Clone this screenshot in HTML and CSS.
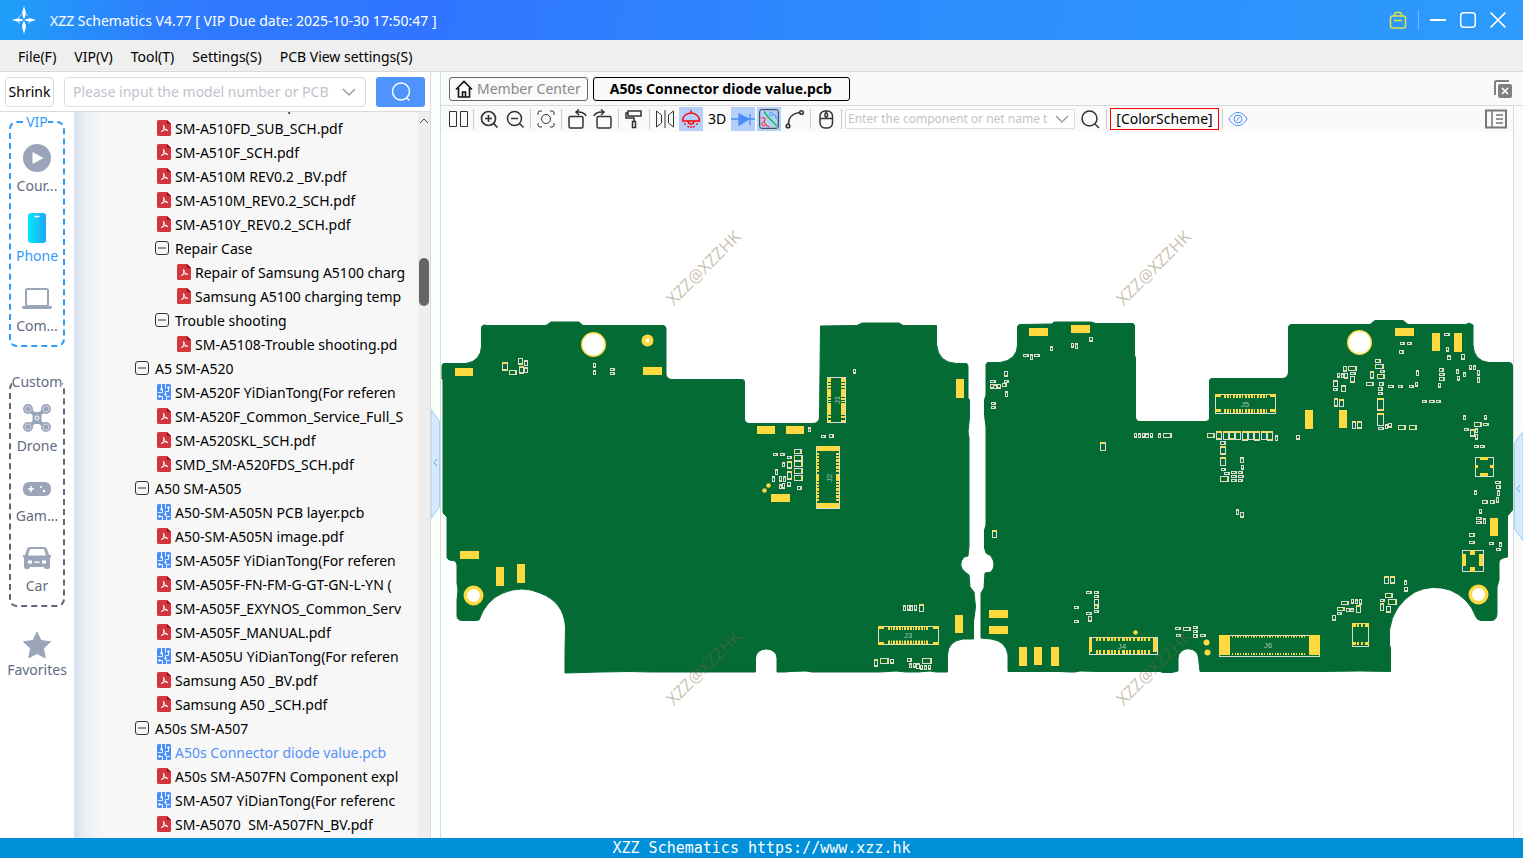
FILE: index.html
```html
<!DOCTYPE html>
<html lang="en">
<head>
  <meta charset="UTF-8">
  <title>XZZ Schematics V4.77</title>
  <link rel="stylesheet" href="styles.css">
</head>
<body>

<!-- shared symbols -->
<svg class="symbols" aria-hidden="true">
  <symbol id="i-pdf" viewBox="0 0 14 16">
    <path d="M1.500 0H10l4 4v10.500a1.500 1.500 0 0 1-1.500 1.500h-11A1.500 1.500 0 0 1 0 14.500v-13A1.500 1.500 0 0 1 1.500 0z" fill="#d3373d"/>
    <path d="M10 0l4 4h-4z" fill="#8f1218"/>
    <path d="M6.600 5.200c0 2.600 1.500 4.300 4.300 5.500M7 6c.2 2.600-1 4.600-3 6M4.400 11.500c1.800-1.500 3.800-2 6-1.500" fill="none" stroke="#fff"/>
  </symbol>
  <symbol id="i-pcb" viewBox="0 0 14 16">
    <rect width="14" height="16" rx="1.500" fill="#4a8ff7"/>
    <path d="M4.500 0v4.500M1 8.500h4.500v-3M8.500 0v4.500M11.500 3v4.500h-3v3M5.500 16v-3.500H2M9.500 16v-3.500H13" fill="none" stroke="#fff" stroke-width=".9"/>
    <g fill="#fff"><circle cx="4.500" cy="5" r="1.200"/><circle cx="11.500" cy="3.500" r="1.200"/><circle cx="8.500" cy="10.500" r="1.200"/><circle cx="2.500" cy="12.500" r="1.200"/></g>
  </symbol>
  <symbol id="i-minus" viewBox="0 0 14 14">
    <rect x=".5" y=".5" width="13" height="13" rx="2.500" fill="none" stroke="#333"/>
    <path d="M3 7h8" stroke="#333"/>
  </symbol>
  <symbol id="i-down" viewBox="0 0 14 14">
    <path d="M1 4l6 6 6-6" fill="none" stroke="#9a9fa8" stroke-width="1.500"/>
  </symbol>
</svg>

<header class="titlebar">
  <svg class="logo" width="24" height="30" viewBox="0 0 24 30">
    <g fill="none" stroke="#bfe4ff" stroke-dasharray="4 3"><circle cx="12" cy="15" r="6"/></g>
    <path d="M12 1l2 7-1.300 5.500h-1.400L10 8zM12 29l2-7-1.300-5.500h-1.400L10 22zM0 15l6-1.800 5 1.200v1.200l-5 1.200zM24 15l-6-1.800-5 1.200v1.200l5 1.200z" fill="#fff"/>
  </svg>
  <h1>XZZ Schematics V4.77 [ VIP Due date: 2025-10-30 17:50:47 ]</h1>
  <div class="win-btns">
    <button aria-label="Toolbox"><svg width="18" height="18" viewBox="0 0 18 18" fill="none" stroke="#e2e23c" stroke-width="1.500"><rect x="1.500" y="5" width="15" height="12" rx="2"/><path d="M5.500 5V3.500a2 2 0 0 1 2-2h3a2 2 0 0 1 2 2V5M5 9.500h8"/></svg></button>
    <span class="win-sep"></span>
    <button aria-label="Minimize"><svg width="18" height="18" viewBox="0 0 18 18" stroke="#fff" stroke-width="2"><path d="M1 9h16"/></svg></button>
    <button aria-label="Maximize"><svg width="18" height="18" viewBox="0 0 18 18" fill="none" stroke="#fff" stroke-width="1.500"><rect x="1.700" y="1.700" width="14.600" height="14.600" rx="3"/></svg></button>
    <button aria-label="Close"><svg width="18" height="18" viewBox="0 0 18 18" stroke="#fff" stroke-width="1.700"><path d="M1.500 1.500l15 15M16.500 1.500l-15 15"/></svg></button>
  </div>
</header>

<nav class="menubar">
  <button>File(F)</button>
  <button>VIP(V)</button>
  <button>Tool(T)</button>
  <button>Settings(S)</button>
  <button>PCB View settings(S)</button>
</nav>

<div class="workspace">

  <!-- left side: search, categories, file tree -->
  <aside class="sidebar">
    <div class="search-row">
      <button class="shrink">Shrink</button>
      <div class="combo">
        <input type="text" aria-label="Model number" placeholder="Please input the model number or PCB">
        <svg width="14" height="14"><use href="#i-down"/></svg>
      </div>
      <button class="search-btn" aria-label="Search"><svg width="20" height="20" viewBox="0 0 20 20" fill="none" stroke="#fff" stroke-width="1.500"><circle cx="10" cy="9.500" r="8.500"/><path d="M15.500 15.500l3 3"/></svg></button>
    </div>

    <div class="side-body">
      <div class="rail">
        <fieldset class="group group-vip">
          <legend>VIP</legend>
          <button class="cat">
            <svg width="30" height="30" viewBox="0 0 30 30"><circle cx="15" cy="15" r="14" fill="#9ba5b9"/><path d="M10.500 9l11 6-11 6z" fill="#fff"/></svg>
            <span>Cour...</span>
          </button>
          <button class="cat active">
            <svg width="30" height="30" viewBox="0 0 30 30"><defs><linearGradient id="ph"><stop offset="0" stop-color="#05e9f8"/><stop offset="1" stop-color="#20a5fb"/></linearGradient></defs><rect x="6" width="18" height="30" rx="3" fill="url(#ph)"/><path d="M12.500 3.500h5" stroke="#fff" stroke-width="1.500"/></svg>
            <span>Phone</span>
          </button>
          <button class="cat">
            <svg width="30" height="30" viewBox="0 0 30 30"><rect x="4" y="6" width="22" height="17" rx="1.500" fill="none" stroke="#9ba5b9" stroke-width="2"/><path d="M0 23h30v1a2 2 0 0 1-2 2H2a2 2 0 0 1-2-2z" fill="#9ba5b9"/></svg>
            <span>Com...</span>
          </button>
        </fieldset>

        <fieldset class="group">
          <legend>Custom</legend>
          <button class="cat">
            <svg width="30" height="30" viewBox="0 0 30 30"><path d="M6 6l9 7 9-7M6 24l9-7 9 7" fill="none" stroke="#9ba5b9" stroke-width="4"/><rect x="10.500" y="9" width="9" height="12" rx="3" fill="#9ba5b9"/><g fill="#9ba5b9"><circle cx="6" cy="6" r="5"/><circle cx="24" cy="6" r="5"/><circle cx="6" cy="24" r="5"/><circle cx="24" cy="24" r="5"/></g><g fill="none" stroke="#dde1e9" stroke-width=".8"><circle cx="6" cy="6" r="3"/><circle cx="24" cy="6" r="3"/><circle cx="6" cy="24" r="3"/><circle cx="24" cy="24" r="3"/></g><circle cx="15" cy="15" r="2" fill="none" stroke="#fff"/></svg>
            <span>Drone</span>
          </button>
          <button class="cat">
            <svg width="30" height="30" viewBox="0 0 30 30"><rect x="1" y="9" width="28" height="14" rx="6" fill="#9ba5b9"/><path d="M6 16h6M9 13v6" stroke="#fff" stroke-width="1.500"/><circle cx="19" cy="14" r="1" fill="#fff"/><circle cx="22" cy="18" r="1.300" fill="#fff"/></svg>
            <span>Gam...</span>
          </button>
          <button class="cat">
            <svg width="30" height="30" viewBox="0 0 30 30"><path fill-rule="evenodd" d="M8 4h14a3 3 0 0 1 3 2l2 6h2v2l-1 1v9a2 2 0 0 1-2 2h-2a2 2 0 0 1-2-2H8a2 2 0 0 1-2 2H4a2 2 0 0 1-2-2v-9l-1-1v-2h2l2-6a3 3 0 0 1 3-2zM8 6l-2 6.500h18L22 6zM6 17.500v3h4v-3zM20 17.500v3h4v-3zM12.500 18.500v1.500h5v-1.500z" fill="#9ba5b9"/></svg>
            <span>Car</span>
          </button>
        </fieldset>

        <button class="cat favorites">
          <svg width="30" height="30" viewBox="0 0 30 30"><path d="M15 2l4 8.500 9.500 1.200-7 6.600 1.700 9.500L15 23.500l-8.200 4.300 1.700-9.500-7-6.600L11 10.500z" fill="#9ba5b9" stroke="#9ba5b9" stroke-linejoin="round"/></svg>
          <span>Favorites</span>
        </button>
      </div>

      <div class="tree-wrap">
        <ul class="tree">
          <li class="lv2"><svg class="file"><use href="#i-pdf"/></svg><span>SM-A510FD_SCH.pdf</span></li>
          <li class="lv2"><svg class="file"><use href="#i-pdf"/></svg><span>SM-A510FD_SUB_SCH.pdf</span></li>
          <li class="lv2"><svg class="file"><use href="#i-pdf"/></svg><span>SM-A510F_SCH.pdf</span></li>
          <li class="lv2"><svg class="file"><use href="#i-pdf"/></svg><span>SM-A510M REV0.2 _BV.pdf</span></li>
          <li class="lv2"><svg class="file"><use href="#i-pdf"/></svg><span>SM-A510M_REV0.2_SCH.pdf</span></li>
          <li class="lv2"><svg class="file"><use href="#i-pdf"/></svg><span>SM-A510Y_REV0.2_SCH.pdf</span></li>
          <li class="lv2"><svg class="fold"><use href="#i-minus"/></svg><span>Repair Case</span></li>
          <li class="lv3"><svg class="file"><use href="#i-pdf"/></svg><span>Repair of Samsung A5100 charg</span></li>
          <li class="lv3"><svg class="file"><use href="#i-pdf"/></svg><span>Samsung A5100 charging temp</span></li>
          <li class="lv2"><svg class="fold"><use href="#i-minus"/></svg><span>Trouble shooting</span></li>
          <li class="lv3"><svg class="file"><use href="#i-pdf"/></svg><span>SM-A5108-Trouble shooting.pd</span></li>
          <li class="lv1"><svg class="fold"><use href="#i-minus"/></svg><span>A5 SM-A520</span></li>
          <li class="lv2"><svg class="file"><use href="#i-pcb"/></svg><span>SM-A520F YiDianTong(For referen</span></li>
          <li class="lv2"><svg class="file"><use href="#i-pdf"/></svg><span>SM-A520F_Common_Service_Full_S</span></li>
          <li class="lv2"><svg class="file"><use href="#i-pdf"/></svg><span>SM-A520SKL_SCH.pdf</span></li>
          <li class="lv2"><svg class="file"><use href="#i-pdf"/></svg><span>SMD_SM-A520FDS_SCH.pdf</span></li>
          <li class="lv1"><svg class="fold"><use href="#i-minus"/></svg><span>A50 SM-A505</span></li>
          <li class="lv2"><svg class="file"><use href="#i-pcb"/></svg><span>A50-SM-A505N PCB layer.pcb</span></li>
          <li class="lv2"><svg class="file"><use href="#i-pdf"/></svg><span>A50-SM-A505N image.pdf</span></li>
          <li class="lv2"><svg class="file"><use href="#i-pcb"/></svg><span>SM-A505F YiDianTong(For referen</span></li>
          <li class="lv2"><svg class="file"><use href="#i-pdf"/></svg><span>SM-A505F-FN-FM-G-GT-GN-L-YN (</span></li>
          <li class="lv2"><svg class="file"><use href="#i-pdf"/></svg><span>SM-A505F_EXYNOS_Common_Serv</span></li>
          <li class="lv2"><svg class="file"><use href="#i-pdf"/></svg><span>SM-A505F_MANUAL.pdf</span></li>
          <li class="lv2"><svg class="file"><use href="#i-pcb"/></svg><span>SM-A505U YiDianTong(For referen</span></li>
          <li class="lv2"><svg class="file"><use href="#i-pdf"/></svg><span>Samsung A50 _BV.pdf</span></li>
          <li class="lv2"><svg class="file"><use href="#i-pdf"/></svg><span>Samsung A50 _SCH.pdf</span></li>
          <li class="lv1"><svg class="fold"><use href="#i-minus"/></svg><span>A50s SM-A507</span></li>
          <li class="lv2 current"><svg class="file"><use href="#i-pcb"/></svg><span>A50s Connector diode value.pcb</span></li>
          <li class="lv2"><svg class="file"><use href="#i-pdf"/></svg><span>A50s SM-A507FN Component expl</span></li>
          <li class="lv2"><svg class="file"><use href="#i-pcb"/></svg><span>SM-A507 YiDianTong(For referenc</span></li>
          <li class="lv2"><svg class="file"><use href="#i-pdf"/></svg><span>SM-A5070&nbsp; SM-A507FN_BV.pdf</span></li>
        </ul>
        <div class="scrollbar">
          <svg width="12" height="18" viewBox="0 0 12 18"><path d="M2 11l4-4 4 4" fill="none" stroke="#444"/></svg>
          <div class="thumb"></div>
        </div>
      </div>
    </div>
  </aside>

  <div class="gutter">
    <button class="handle" aria-label="Collapse tree"><svg width="9" height="110" viewBox="0 0 9 110"><path d="M0 .5L8.500 12v86L0 109.500z" fill="#d6eafd" stroke="#9fd0f8"/><path d="M6 50l-3 3.500 3 3.500" fill="none" stroke="#55aaf0"/></svg></button>
  </div>

  <main class="viewer">
    <div class="tabs">
      <button class="tab"><svg width="18" height="18" viewBox="0 0 18 18" fill="none" stroke="#111" stroke-width="1.600"><path d="M1 9.500l8-8 8 8M3.500 8v9h11V8M7.500 17v-5h3v5"/></svg>Member Center</button>
      <button class="tab tab-active">A50s Connector diode value.pcb</button>
      <button class="close-all" aria-label="Close all"><svg width="18" height="18" viewBox="0 0 18 18"><path d="M1 15V2.500A1.500 1.500 0 0 1 2.500 1H15" fill="none" stroke="#808080" stroke-width="2"/><rect x="4" y="4" width="14" height="14" rx="2" fill="#808080"/><path d="M8 8l6 6M14 8l-6 6" stroke="#fff" stroke-width="1.700"/></svg></button>
    </div>

    <div class="view-body">
      <div class="view-main">
        <div class="toolbar">
          <button aria-label="Split view"><svg viewBox="0 0 20 20"><path d="M1.500 2.500h7v15h-7zM12.500 2.500h7v15h-7z"/></svg></button>
          <i></i>
          <button aria-label="Zoom in"><svg viewBox="0 0 20 20" stroke-width="1.700"><circle cx="9.500" cy="9.500" r="7"/><path d="M14.500 14.500l4 4M6 9.500h7M9.500 6v7"/></svg></button>
          <button aria-label="Zoom out"><svg viewBox="0 0 20 20" stroke-width="1.500"><circle cx="9.500" cy="9.500" r="7"/><path d="M14.500 14.500l4 4M6 9.500h7"/></svg></button>
          <i></i>
          <button aria-label="Fit"><svg viewBox="0 0 20 20"><circle cx="10" cy="10" r="4.500"/><path d="M2 6V4a2 2 0 0 1 2-2h2M14 2h2a2 2 0 0 1 2 2v2M18 14v2a2 2 0 0 1-2 2h-2M6 18H4a2 2 0 0 1-2-2v-2"/></svg></button>
          <i></i>
          <button aria-label="Rotate left"><svg viewBox="0 0 20 20" stroke-width="1.500"><rect x="2" y="7.500" width="14" height="11.500" rx="1.500"/><path d="M19 7c-1-3-4-4.500-10-4M12 .5L9 3l3 3"/></svg></button>
          <button aria-label="Rotate right"><svg viewBox="0 0 20 20" stroke-width="1.500"><rect x="4" y="7.500" width="14" height="11.500" rx="1.500"/><path d="M1 7c1-3 4-4.500 10-4M8 .5L11 3 8 6"/></svg></button>
          <i></i>
          <button aria-label="Format"><svg viewBox="0 0 20 20" stroke-width="1.500"><path d="M4 2h13v5H4zM4 4H2v5h8v3M8.500 12.500h3v6h-3z"/></svg></button>
          <i></i>
          <button aria-label="Mirror"><svg viewBox="0 0 20 20"><path d="M1.500 2v16l5-4V6zM18.500 2v16l-5-4V6zM10 1v18"/></svg></button>
          <button class="on" aria-label="Lamp"><svg class="red" viewBox="0 0 20 20" stroke-width="1.300"><path d="M10 1v3M1.500 12a8.500 8 0 0 1 17 0zM7 12a3 3 0 0 0 6 0M3 14.500l2 1M17 14.500l-2 1M6.500 17l1.500 1.500M13.500 17L12 18.500M10 17v2"/></svg></button>
          <button>3D</button>
          <button class="on" aria-label="Diode"><svg class="wide blue" viewBox="0 0 24 20" stroke-width="1.300"><path d="M0 10h24M19 5v11"/><path d="M8 5l10 5-10 6z" fill="#4a8ff7"/></svg></button>
          <button class="on" aria-label="Net"><svg viewBox="0 0 20 20"><rect x=".7" y=".7" width="18.600" height="18.600" rx="2"/><path d="M5 2.500l4 5.500 9 9" stroke="#13c24a" stroke-width="1.500"/><path d="M14 5c3 0 2 3 4 5" stroke="#4a9ff7" stroke-width="1.200"/><path d="M2 9c2 0 4-1 4 1s-1 2-1 3M6 15.500l4 2.500" stroke="#f33" stroke-width="1.200"/><circle cx="4.500" cy="15" r="1.800" stroke="#f33"/><circle cx="12" cy="5" r="1.800" stroke="#4a9ff7"/></svg></button>
          <button aria-label="Curve"><svg viewBox="0 0 20 20" stroke-width="1.600"><path d="M3.500 15c0-6 4-10.500 10.500-11.500"/><circle cx="3" cy="17" r="1.800"/><circle cx="16.500" cy="3.500" r="1.800"/></svg></button>
          <i></i>
          <button aria-label="Mouse"><svg viewBox="0 0 20 20" stroke-width="1.500"><rect x="4" y="2" width="12.500" height="17" rx="5"/><path d="M4 9.500h12.500M10.200 2v2M10.200 8v1.500"/><rect x="9" y="4" width="2.500" height="4" rx="1"/></svg></button>
          <i></i>
          <div class="combo combo-net">
            <input type="text" aria-label="Component or net name" placeholder="Enter the component or net name t">
            <svg width="14" height="14"><use href="#i-down"/></svg>
          </div>
          <button class="find" aria-label="Find"><svg viewBox="0 0 20 20" stroke-width="1.500"><circle cx="9.500" cy="9.500" r="7.500"/><path d="M15 15l4 4"/></svg></button>
          <i></i>
          <button class="scheme">[ColorScheme]</button>
          <i></i>
          <button aria-label="Visibility"><svg class="blue" viewBox="0 0 20 20"><path d="M1 10c3-5 6-6.500 9-6.500s6 1.500 9 6.500c-3 5-6 6.500-9 6.500S4 15 1 10z"/><circle cx="10" cy="10" r="4"/><path d="M8.500 12l3-4"/></svg></button>
          <button class="panel-btn" aria-label="Side panel"><svg class="wide grey" viewBox="0 0 24 20"><path d="M2 1.500h20v17H2z" stroke-width="2"/><path d="M8 1v18M12 6h7M12 10h7M12 14h7" stroke-width="1.500"/></svg></button>
        </div>
        <div class="canvas">
          <svg id="board" viewBox="441 132 1072 706"></svg>
        </div>
      </div>
      <div class="gutter gutter-right">
        <button class="handle" aria-label="Expand panel"><svg width="9" height="110" viewBox="0 0 9 110"><path d="M9 .5L.5 12v86L9 109.500z" fill="#d6eafd" stroke="#9fd0f8"/><path d="M6 54l-3 3.500 3 3.500" fill="none" stroke="#55aaf0"/></svg></button>
      </div>
    </div>
  </main>
</div>

<footer class="statusbar">XZZ Schematics https://www.xzz.hk</footer>

<script src="board.js"></script>
</body>
</html>
```
FILE: styles.css
```css
* {
  box-sizing: border-box;
}

html, body {
  margin: 0;
  height: 100%;
}

body {
  display: flex;
  flex-direction: column;
  overflow: hidden;
  font-family: "Noto Sans", "Open Sans", sans-serif;
  font-size: 14px;
  line-height: 20px;
  color: #000;
  background: #fff;
}

button {
  margin: 0;
  padding: 0;
  border: none;
  background: none;
  font: inherit;
  color: inherit;
  cursor: pointer;
}

svg {
  display: block;
  flex: none;
}

.symbols {
  position: absolute;
  width: 0;
  height: 0;
}

/* title bar */
.titlebar {
  display: flex;
  align-items: center;
  flex: none;
  height: 40px;
  padding: 0 16px 0 12px;
  color: #fff;
  background: linear-gradient(100deg, #1fa0f9 0, #2f7bfd 170px, #3074ff 420px, #2d8bfd 850px, #2c9bfd 100%);
}
.titlebar h1 {
  flex: 1;
  margin: 0 0 0 14px;
  padding-top: 2px;
  font-size: 14px;
  font-weight: normal;
  white-space: nowrap;
}
.win-btns {
  display: flex;
  align-items: center;
  gap: 12px;
}
.win-sep {
  width: 1px;
  height: 20px;
  margin: 0 -2px 0 -1px;
  background: #6dbbfd;
}

/* menu */
.menubar {
  display: flex;
  align-items: center;
  flex: none;
  gap: 18px;
  height: 32px;
  padding: 2px 18px 0;
  border-bottom: 1px solid #dadada;
  background: #efefef;
}

.workspace {
  display: flex;
  flex: 1;
  min-height: 0;
}

/* sidebar */
.sidebar {
  display: flex;
  flex-direction: column;
  flex: none;
  width: 431px;
  border-right: 1px solid #dadada;
}
.search-row {
  display: flex;
  align-items: center;
  flex: none;
  height: 40px;
  padding: 0 5px;
  border-bottom: 1px solid #dadada;
}
.shrink {
  width: 49px;
  height: 30px;
  border: 1px solid #dcdcdc;
  border-radius: 4px;
}
.combo {
  display: flex;
  align-items: center;
  flex: 1;
  height: 30px;
  margin: 0 10px;
  padding: 0 9px 0 8px;
  border: 1px solid #dcdcdc;
  border-radius: 4px;
  background: #fff;
}
.combo input {
  flex: 1;
  min-width: 0;
  padding: 0;
  border: none;
  outline: none;
  background: none;
  font: inherit;
}
.combo input::placeholder {
  color: #bfc3cb;
  opacity: 1;
}
.combo svg {
  margin-left: 6px;
}
.search-btn {
  display: flex;
  align-items: center;
  justify-content: center;
  width: 49px;
  height: 30px;
  border-radius: 3px;
  background: #4f93fd;
}
.side-body {
  display: flex;
  flex: 1;
  min-height: 0;
}

/* category rail */
.rail {
  flex: none;
  width: 74px;
  padding: 0 9px;
  color: #5f6b80;
}
.group {
  min-width: 0;
  margin: 0 0 25px;
  padding: 11px 0 4px;
  border: 2px dashed #5d667b;
  border-radius: 8px;
}
.group legend {
  margin: 0 auto;
  padding: 0;
}
.group-vip {
  border-color: #2f9bf5;
}
.group-vip legend {
  color: #2f9bf5;
}
.cat {
  display: flex;
  flex-direction: column;
  align-items: center;
  gap: 3px;
  width: 100%;
  margin-bottom: 12px;
  white-space: nowrap;
}
.cat span {
  height: 25px;
}
.group .cat:last-child {
  margin-bottom: 0;
}
.cat.active {
  color: #2f9bf5;
}
.favorites {
  gap: 0;
  margin-top: -2px;
}

/* file tree */
.tree-wrap {
  display: flex;
  flex: 1;
  min-width: 0;
  background: linear-gradient(90deg, #d6e0f0, #eceff5 12px, #f7f7f7 28px);
}
.tree {
  flex: 1;
  min-width: 0;
  margin: -20px 12px 0 0;
  padding: 0;
  list-style: none;
  clip-path: inset(20px 0 0 0);
}
.tree li {
  display: flex;
  align-items: center;
  height: 24px;
  white-space: nowrap;
  overflow: hidden;
}
.tree span {
  padding-top: 2px;
}
.lv1 { padding-left: 61px; }
.lv2 { padding-left: 81px; }
.lv3 { padding-left: 101px; }
.file {
  width: 14px;
  height: 16px;
  margin: 0 4px 0 2px;
}
.fold {
  width: 14px;
  height: 14px;
  margin-right: 6px;
}
.current {
  color: #5592f7;
}
.scrollbar {
  flex: none;
  width: 12px;
  background: #eee;
}
.thumb {
  width: 10px;
  height: 48px;
  margin: 128px auto 0;
  border-radius: 5px;
  background: #666;
}

/* splitters */
.gutter {
  display: flex;
  align-items: center;
  flex: none;
  width: 9px;
  padding-top: 18px;
  background: #f9fff9;
}
.gutter-right {
  width: 10px;
  padding-top: 28px;
  border-left: 1px solid #dadada;
  background: #fafafa;
}

/* viewer */
.viewer {
  display: flex;
  flex-direction: column;
  flex: 1;
  min-width: 0;
  border-left: 1px solid #dadada;
}
.tabs {
  display: flex;
  align-items: center;
  flex: none;
  gap: 5px;
  height: 34px;
  padding: 0 11px 0 8px;
  border-bottom: 1px solid #dadada;
  background: #fafafa;
}
.tab {
  display: flex;
  align-items: center;
  gap: 4px;
  height: 24px;
  padding: 0 6px 0 5px;
  border: 1px solid #666;
  border-radius: 3px;
  color: #888;
}
.tab-active {
  padding: 0 17px 0 16px;
  border-color: #000;
  color: #000;
  font-weight: bold;
}
.close-all {
  margin-left: auto;
}
.view-body {
  display: flex;
  flex: 1;
  min-height: 0;
}
.view-main {
  display: flex;
  flex-direction: column;
  flex: 1;
  min-width: 0;
}
.toolbar {
  display: flex;
  align-items: center;
  flex: none;
  gap: 2px;
  height: 26px;
  padding: 0 5px;
  background: #fafafa;
}
.toolbar button {
  display: flex;
  align-items: center;
  justify-content: center;
  flex: none;
  width: 24px;
  height: 24px;
}
.toolbar button svg {
  width: 20px;
  height: 20px;
  fill: none;
  stroke: #333;
}
.toolbar button .wide {
  width: 24px;
}
.toolbar button .red {
  stroke: #f00;
}
.toolbar button .blue {
  stroke: #4a8ff7;
}
.toolbar button .grey {
  stroke: #777;
}
.toolbar .on {
  background: #b5cffb;
}
.toolbar i {
  width: 1px;
  height: 20px;
  margin: 0 1px;
  background: #ccc;
}
.toolbar .combo-net {
  flex: none;
  width: 230px;
  height: 20px;
  margin: 0;
  padding: 0 5px 0 2px;
  border-radius: 2px;
  font-size: 12px;
}
.toolbar .find {
  width: 26px;
}
.toolbar .scheme {
  width: 109px;
  height: 22px;
  border: 1px solid #f00;
}
.toolbar .panel-btn {
  margin-left: auto;
}
.canvas {
  flex: 1;
  min-height: 0;
  background: #fff;
}
#board {
  width: 100%;
  height: 100%;
}

/* board drawing */
.pcb {
  fill: #046b35;
  stroke: #046b35;
}
.pad {
  fill: #ffd940;
}
.hole {
  fill: #fff;
}
.part {
  fill: #046b35;
  stroke: #dcdcdc;
}
.pins {
  fill: none;
  stroke: #ffd940;
}
.ref {
  fill: #a9c4b4;
  font: 8px "Liberation Sans", sans-serif;
  text-anchor: middle;
}
.mark {
  fill: #7a6438;
  fill-opacity: .42;
  font: 17px "Open Sans", sans-serif;
  text-anchor: middle;
}

.statusbar {
  flex: none;
  height: 20px;
  font: 15px/20px "DejaVu Sans Mono", monospace;
  text-align: center;
  color: #fff;
  background: #0090d9;
}
```
FILE: board.js
```js
const board = document.getElementById('board');

function add(tag, cls, attrs, text) {
  const el = document.createElementNS('http://www.w3.org/2000/svg', tag);
  el.setAttribute('class', cls);
  for (const k in attrs) el.setAttribute(k, attrs[k]);
  if (text) el.textContent = text;
  board.appendChild(el);
}

function rect(cls, x, y, w, h) {
  add('rect', cls, { x: x, y: y, width: w, height: h });
}

// outlines of both sides
const outlines = [
  'M442 366Q442 363.500 444 363.500H466Q481 361 481.500 346V327Q483 324 487 325.500H546L551 322H579L583 325.500H663Q666 325.500 666 329V375Q667 379 671 379.500H742Q744.500 379.500 744.500 382V419Q745 423.500 750 423.500H813Q819 423 819.500 417L820.500 326L857 325.500L862 323H899L903 325.500H936.500V344Q938 363 957 363.500H966Q968 364 968 366V398L969.500 400V417L968 432L969 438V546L968 556L964 557Q957 565 965 572L969 575L970 587L974 592L975.500 607L973.500 622V639H963Q948 641 947.500 655V672H936L930 671L918 672H906L896 671L880 672H812L806 671L790 671.500L785 672H777V658A10.700 9 0 0 0 755.500 658V672H650L630 671.500L600 672L565 673V652L565.500 627Q564 602 540 593Q522 585 503 593Q486 600 479 620L475 620.500H462Q457 620 457 616V600L458 590L457 583V565Q456 560 452 560.500Q447 560 447 557V517L443 513V380L442 379Z',
  'M986 365Q986 363 988 362.500H1000Q1017 360 1017.500 345V327Q1018 324.500 1020 324.500L1052 324L1054 322H1091L1096 323.500H1133Q1134.500 324 1134.500 326V355L1135.500 358V417Q1136 421.500 1140 421.500H1206Q1209.500 421 1209.500 418V380L1211 378.500H1282Q1288 378 1288.500 372V327Q1289 324.500 1291 324.500H1370L1375 320.500H1403L1408 324.500H1466L1469 323L1473 325V345Q1474 361 1489 362.500H1509Q1512.500 362.500 1512.500 366V510L1507.500 516V557Q1499 558 1499 563V580L1497 587V613Q1497 620 1492 620.500H1481Q1477 620 1476 617Q1469 598 1450 590Q1432 584 1415 592Q1393 605 1389.500 630V645L1390.500 648V671.500L1360 671L1320 671.500H1200L1198.500 658A10 9 0 0 0 1178 658V671L1172 672.500H1163L1160 671.500H1098L1080 671L1075 672H1069L1060 671.500H1008V655Q1006 641 991 639L981 638V600L981 593L984 588L985 573L991 572Q997 565 991 556L986 553L984.500 548V530L986 525V437V427L984.500 415V400L986 395Z'
];
outlines.forEach(d => add('path', 'pcb', { d: d }));

// large gold pads
[
  [455,368,18,8],[643,367,19,8],[956,379,8,19],[757,426,18,8],[786,426,18,8],[771,494,19,8],
  [460,551,19,8],[496,567,8,19],[517,564,8,19],[955,615,8,18],[989,610,19,8],[989,626,19,8],
  [1029,328,19,8],[1071,325,19,8],[1395,328,19,8],[1432,333,8,18],[1454,333,8,19],[1305,410,8,19],
  [1339,410,8,18],[1490,518,8,18],[1019,647,8,19],[1034,647,8,18],[1051,647,8,19]
].forEach(p => rect('pad', ...p));

// screw holes and test points: x, y, outer radius, hole radius
[
  [593.500,344.500,12.500,11],[1359.500,342.500,12.500,11],[647.500,340.500,6,2],[473.500,595.500,10,6.500],
  [1478.500,594.500,10,6.500],[764.500,490.500,2.300,0],[768.500,485.500,2.300,0],[1135.500,632.500,2.300,0],
  [1206.500,642.500,3,0],[1207.500,652.500,3,0]
].forEach(c => {
  add('circle', 'pad', { cx: c[0], cy: c[1], r: c[2] });
  if (c[3]) add('circle', 'hole', { cx: c[0], cy: c[1], r: c[3] });
});

// small parts: x, y, w, h
const parts = [
  [502,362,6,9],[509,370,8,5],[518,358,5,7],[524,360,4,6],[519,366,5,8],[524,367,4,6],[593,363,3,5],[593,370,3,5],
  [610,368,5,3],[610,372,5,3],[853,369,3,5],[808,427,3,5],[821,435,5,3],[829,434,5,4],[773,453,5,3],[780,453,5,3],
  [787,456,5,3],[782,462,3,5],[787,461,5,8],[775,469,3,6],[787,471,5,9],[772,476,3,6],[779,476,3,6],[783,476,3,6],
  [787,482,4,5],[779,484,3,5],[782,483,3,6],[794,449,8,5],[794,455,9,6],[794,461,9,6],[794,468,9,6],[794,475,9,6],
  [797,486,5,4],[903,605,3,6],[907,605,3,6],[910,605,3,6],[914,605,3,6],[919,604,5,8],[874,659,4,8],[880,658,9,6],
  [890,659,4,5],[907,658,5,4],[922,658,10,6],[909,663,3,5],[913,663,3,5],[916,663,4,6],[920,665,3,5],[924,665,3,5],
  [928,665,3,5],[992,530,5,8],
  [1004,371,4,6],[990,380,6,3],[1004,380,5,3],[1002,383,5,4],[990,384,4,5],[993,384,4,5],[997,384,4,5],[1005,391,3,6],
  [991,402,5,3],[991,406,5,3],[1023,354,6,3],[1030,354,3,6],[1034,354,6,3],[1050,346,3,5],[1071,343,3,5],[1075,343,3,6],
  [1089,337,4,5],[1100,442,6,9],[1134,433,3,5],[1138,433,3,5],[1142,433,3,5],[1145,433,4,5],[1150,433,3,5],[1158,433,3,5],
  [1163,433,9,5],[1207,433,8,5],[1216,431,6,9],[1223,431,6,9],[1229,431,6,9],[1235,431,6,9],[1242,431,6,10],[1248,431,6,9],
  [1254,431,6,10],[1261,431,6,9],[1267,431,6,10],[1220,441,6,4],[1220,446,6,9],[1220,457,6,9],[1221,468,5,3],[1224,472,6,3],
  [1220,476,9,6],[1231,471,6,3],[1231,475,6,3],[1231,479,6,3],[1238,471,5,3],[1238,475,6,3],[1238,479,5,3],[1240,457,4,6],
  [1241,465,3,5],[1236,509,3,6],[1240,512,4,6],[1275,435,3,6],[1296,435,4,5],
  [1444,333,6,3],[1446,347,3,5],[1447,355,4,5],[1461,354,4,6],[1400,342,5,3],[1407,342,5,3],[1399,350,5,4],[1375,359,6,4],
  [1375,364,9,5],[1380,370,5,3],[1377,374,8,5],[1379,382,5,4],[1366,382,8,4],[1370,371,4,8],[1378,387,5,4],[1378,392,5,3],
  [1388,385,6,3],[1398,385,5,3],[1409,385,5,3],[1415,382,3,5],[1416,370,3,6],[1343,366,4,6],[1348,366,9,5],[1337,373,3,5],
  [1341,373,3,5],[1344,373,4,6],[1350,372,6,3],[1350,376,5,7],[1333,380,5,7],[1333,388,5,3],[1341,385,5,7],[1334,398,4,9],
  [1339,399,5,8],[1377,398,7,13],[1377,413,7,13],[1378,427,6,3],[1385,424,3,5],[1388,423,4,5],[1398,425,8,5],[1409,425,8,5],
  [1352,421,4,8],[1357,421,5,8],[1439,368,5,4],[1439,373,6,3],[1439,377,6,4],[1438,383,3,5],[1456,369,3,5],[1457,376,3,5],
  [1463,372,3,5],[1469,365,3,5],[1473,365,3,5],[1477,370,3,6],[1477,377,3,6],[1422,400,5,3],[1429,400,6,3],[1436,400,5,3],
  [1463,415,3,5],[1484,415,3,5],[1474,422,8,5],[1483,423,6,3],[1464,428,5,3],[1470,429,5,8],[1475,428,3,5],[1475,434,3,6],
  [1474,445,5,3],[1480,445,5,3],[1495,481,6,3],[1496,485,5,4],[1497,490,3,6],[1496,497,3,6],[1474,490,3,5],[1482,500,6,4],
  [1490,500,5,4],[1479,509,3,5],[1476,517,6,3],[1476,521,6,3],[1483,518,3,6],[1469,533,6,4],[1469,541,6,3],[1489,542,5,3],
  [1499,542,3,5],[1496,548,5,3],
  [1086,591,6,3],[1094,591,5,3],[1094,595,5,3],[1094,599,5,7],[1094,605,5,4],[1094,610,5,3],[1086,612,6,3],[1088,616,4,6],
  [1074,606,5,3],[1074,620,5,3],[1175,627,6,3],[1183,627,8,4],[1176,634,5,3],[1193,626,5,3],[1193,630,5,3],[1193,634,5,4],
  [1200,634,6,3],[1332,615,4,6],[1337,607,8,4],[1337,612,5,3],[1341,601,8,4],[1346,608,5,4],[1350,608,4,4],[1351,599,3,5],
  [1355,599,3,5],[1359,599,3,6],[1356,605,5,8],[1380,599,5,3],[1380,603,4,8],[1386,606,5,7],[1388,599,9,6],[1385,593,8,5],
  [1384,576,5,8],[1390,576,5,8],[1404,580,3,5],[1404,587,4,5]
];
parts.forEach(([x, y, w, h], n) => {
  rect('part', x + .5, y + .5, w - 1, h - 1);
  const both = Math.max(w, h) > 7;
  if (w > h) {
    rect('pad', x + w - 2, y + 1, 1, h - 2);
    if (both) rect('pad', x, y + 1, 1, h - 2);
  } else {
    rect('pad', x + 1, n % 2 ? y + 1 : y + h - 2, w - 2, 1);
    if (both) rect('pad', x + 1, y, w - 2, 2);
  }
});

// connectors
function pins(d, width, dash) {
  add('path', 'pins', { d: d, 'stroke-width': width, 'stroke-dasharray': dash });
}
[
  [827,377,19,46],[816,446,24,63],[878,626,61,19],[1089,637,69,18],[1215,394,61,20],[1219,635,101,22],
  [1475,457,19,20],[1462,550,22,22],[1352,623,17,24]
].forEach(([x, y, w, h]) => rect('part', x + .5, y + .5, w - 1, h - 1));

pins('M829 378V422M843 378V422', 4, '4 1 2 1 2 1 8 1 2 1 1 1 12 1 2 2 4');
rect('pad', 817, 446, 22, 5);
rect('pad', 817, 503, 22, 5);
pins('M817.500 453V501M837.500 453V501', 3, '2 1 2 1 3 1 2 1 3 1 2 2 7 1');
[[878,626],[933,626],[878,642],[933,642],[1215,394],[1270,394],[1215,409],[1270,409]].forEach(p => rect('pad', p[0], p[1], 6, 3));
pins('M888 628H929M888 642.500H929', 4, '2 1 1 1 2 1 2 1');
rect('pad', 1089, 638, 3, 14);
rect('pad', 1153, 638, 4, 14);
pins('M1096 639H1150M1096 652H1150', 4, '2 1 2 2 2 2 3 1');
pins('M1224 396H1267M1224 411H1267', 4, '2 1 2 1 1 2 2 1');
rect('pad', 1219, 635, 11, 20);
rect('pad', 1309, 635, 11, 20);
pins('M1232 636.500H1307M1232 654H1307', 2, '1 2 1 1 2 1');
[
  [1480,457,8,3],[1480,473,8,3],[1475,465,3,3],[1490,465,4,3],
  [1470,550,5,5],[1470,567,5,5],[1462,554,4,12],[1479,554,4,12],
  [1352,623,4,4],[1365,623,4,4],[1352,642,4,3],[1365,642,4,3],[1357,623,2,4],[1361,623,2,4],[1357,642,2,3],[1361,642,2,3]
].forEach(p => rect('pad', ...p));

// reference names
[['J3',908,638],['J4',1122,649],['J5',1245,407],['J6',1268,648]].forEach(r => add('text', 'ref', { x: r[1], y: r[2] }, r[0]));
[['J1',840,400],['J2',832,478]].forEach(r => add('text', 'ref', { transform: `translate(${r[1]} ${r[2]}) rotate(-90)` }, r[0]));

// watermark
[[708,272],[1158,272],[708,672],[1158,672]].forEach(m => add('text', 'mark', { transform: `translate(${m[0]} ${m[1]}) rotate(-45)` }, 'XZZ@XZZHK'));
```
